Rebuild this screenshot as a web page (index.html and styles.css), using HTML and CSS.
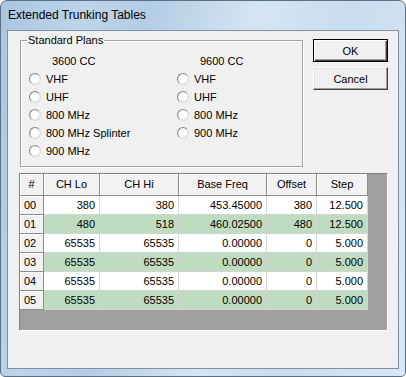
FILE: index.html
```html
<!DOCTYPE html>
<html lang="en">
<head>
    <meta charset="UTF-8">
    <title>Extended Trunking Tables</title>
    <link rel="stylesheet" href="styles.css">
</head>
<body>
    <div class="window">
        <div class="titlebar">Extended Trunking Tables</div>
        <div class="client">
            <div class="top">
                <fieldset class="plans">
                    <legend>Standard Plans</legend>
                    <div class="plan-cols">
                        <div class="col">
                            <div class="col-head">3600 CC</div>
                            <label class="radio"><span class="dot"></span>VHF</label>
                            <label class="radio"><span class="dot"></span>UHF</label>
                            <label class="radio"><span class="dot"></span>800 MHz</label>
                            <label class="radio"><span class="dot"></span>800 MHz Splinter</label>
                            <label class="radio"><span class="dot"></span>900 MHz</label>
                        </div>
                        <div class="col">
                            <div class="col-head">9600 CC</div>
                            <label class="radio"><span class="dot"></span>VHF</label>
                            <label class="radio"><span class="dot"></span>UHF</label>
                            <label class="radio"><span class="dot"></span>800 MHz</label>
                            <label class="radio"><span class="dot"></span>900 MHz</label>
                        </div>
                    </div>
                </fieldset>
                <div class="buttons">
                    <button class="btn default">OK</button>
                    <button class="btn">Cancel</button>
                </div>
            </div>

            <div class="grid">
                <div class="grid-table">
                    <div class="hd">#</div>
                    <div class="hd">CH Lo</div>
                    <div class="hd">CH Hi</div>
                    <div class="hd">Base Freq</div>
                    <div class="hd">Offset</div>
                    <div class="hd">Step</div>

                    <div class="fx">00</div><div class="td">380</div><div class="td">380</div><div class="td">453.45000</div><div class="td">380</div><div class="td">12.500</div>
                    <div class="fx">01</div><div class="td alt">480</div><div class="td alt">518</div><div class="td alt">460.02500</div><div class="td alt">480</div><div class="td alt">12.500</div>
                    <div class="fx">02</div><div class="td">65535</div><div class="td">65535</div><div class="td">0.00000</div><div class="td">0</div><div class="td">5.000</div>
                    <div class="fx">03</div><div class="td alt">65535</div><div class="td alt">65535</div><div class="td alt">0.00000</div><div class="td alt">0</div><div class="td alt">5.000</div>
                    <div class="fx">04</div><div class="td">65535</div><div class="td">65535</div><div class="td">0.00000</div><div class="td">0</div><div class="td">5.000</div>
                    <div class="fx">05</div><div class="td alt">65535</div><div class="td alt">65535</div><div class="td alt">0.00000</div><div class="td alt">0</div><div class="td alt">5.000</div>
                </div>
            </div>
        </div>
    </div>
</body>
</html>
```
FILE: styles.css
```css
body {
    margin: 0;
    width: 406px;
    height: 377px;
    overflow: hidden;
    background: #fff;
    font-family: "Liberation Sans", Arial, sans-serif;
    font-size: 11px;
    color: #000;
}

.window {
    box-sizing: border-box;
    width: 406px;
    height: 377px;
    display: flex;
    flex-direction: column;
    border: 1px solid #5b6f85;
    border-radius: 7px 7px 5px 5px;
    background: linear-gradient(100deg, #a9c6e1 0%, #bdd5ea 18%, #b3cde5 32%, #d5e5f2 55%, #c9ddef 75%, #d9e8f4 100%);
}

.titlebar {
    height: 29px;
    line-height: 29px;
    padding-left: 7px;
    font-size: 12px;
}

.client {
    flex: 1;
    margin: 0 6px 7px;
    border: 1px solid #7f90a3;
    background: #f0f0f0;
}

.top {
    display: flex;
    align-items: flex-start;
    margin: 3px 0 0 12px;
}

.plans {
    box-sizing: border-box;
    width: 283px;
    height: 133px;
    margin: 0;
    padding: 0 0 0 6px;
    border: 1px solid #a0a0a0;
    box-shadow: 1px 1px 0 #fff, inset 1px 1px 0 #fff;
}

.plans legend {
    padding: 0 1px;
    line-height: 13px;
}

.plan-cols {
    display: grid;
    grid-template-columns: 148px 1fr;
    padding-top: 5px;
    margin-left: 2px;
}

.col-head {
    height: 18px;
    line-height: 18px;
    padding-left: 23px;
}

.radio {
    display: flex;
    align-items: center;
    gap: 5px;
    height: 18px;
}

.dot {
    box-sizing: border-box;
    width: 12px;
    height: 12px;
    border-radius: 50%;
    border: 1px solid;
    border-color: #888 #d8d8d8 #d8d8d8 #888;
    background: radial-gradient(circle, #fff 0 35%, #e4e4e4 100%);
}

.buttons {
    display: flex;
    flex-direction: column;
    gap: 5px;
    margin: 5px 0 0 10px;
}

.btn {
    box-sizing: border-box;
    width: 75px;
    height: 23px;
    padding: 0;
    font: inherit;
    color: #000;
    background: #f0f0f0;
    border: 1px solid;
    border-color: #fff #404040 #404040 #fff;
    box-shadow: inset -1px -1px 0 #a0a0a0, inset 1px 1px 0 #e3e3e3;
}

.btn.default {
    border: 1px solid #000;
    box-shadow: inset 1px 1px 0 #fff, inset -1px -1px 0 #404040, inset -2px -2px 0 #a0a0a0;
}

.grid {
    box-sizing: border-box;
    width: 369px;
    height: 158px;
    margin: 6px 0 0 11px;
    border: 1px solid;
    border-color: #808080 #fff #fff #808080;
    background: #a0a0a0;
}

.grid-table {
    display: grid;
    grid-template-columns: 24px 56px 79px 88px 50px 51px;
    grid-template-rows: 22px repeat(6, 19px);
}

.grid-table > div {
    box-sizing: border-box;
    border-right: 1px solid #d4d4d4;
    border-bottom: 1px solid #d4d4d4;
    white-space: nowrap;
}

.grid-table .hd,
.grid-table .fx {
    background: #f2f2f2;
    border-right-color: #8c8c8c;
    border-bottom-color: #8c8c8c;
    box-shadow: inset 1px 1px 0 #fff;
}

.hd {
    line-height: 21px;
    text-align: center;
}

.fx {
    line-height: 18px;
    padding-left: 4px;
}

.td {
    line-height: 18px;
    padding-right: 4px;
    text-align: right;
    background: #fff;
}

.td.alt {
    background: #c0dcc0;
}
```
